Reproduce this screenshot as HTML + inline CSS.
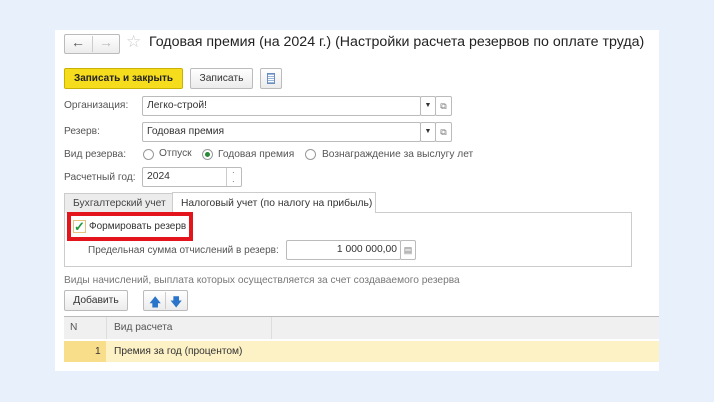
<!DOCTYPE html>
<html><head><meta charset="utf-8"><style>
*{box-sizing:border-box;margin:0;padding:0}
body{width:714px;height:402px;background:#e8f1fb;font-family:"Liberation Sans",sans-serif;font-size:10px;color:#444;position:relative;overflow:hidden;white-space:nowrap}
.p{position:absolute}
#w{left:55px;top:30px;width:604px;height:341px;background:#fff}
.btn{position:absolute;border:1px solid #bbb;border-radius:2px;background:linear-gradient(#fff,#ececec);height:21px;line-height:19px;text-align:center;color:#333;font-size:10.3px}
.inp{position:absolute;border:1px solid #bbb;border-radius:2px;height:20px;line-height:18px;padding-left:4px;color:#333;background:#fff;font-size:10.3px}
.lbl{position:absolute;color:#555;font-size:10.2px}
.rad{position:absolute;width:11px;height:11px;border:1px solid #999;border-radius:50%;background:#fff}
</style></head><body>
<div id="w" class="p"></div>
<div class="btn" style="left:64px;top:34px;width:56px;height:20px"></div>
<div class="p" style="left:92px;top:36px;width:1px;height:16px;background:#ccc"></div>
<div class="p" style="left:71px;top:34px;font-size:14px;color:#555">←</div>
<div class="p" style="left:99px;top:34px;font-size:14px;color:#bbb">→</div>
<div class="p" style="left:126px;top:32px;font-size:17px;color:#ccc">☆</div>
<div class="p" style="left:149px;top:34px;font-size:14.2px;color:#222">Годовая премия (на 2024 г.) (Настройки расчета резервов по оплате труда)</div>
<div class="btn" style="left:64px;top:68px;width:119px;background:#f5dc1c;border-color:#c9b100;color:#222;font-weight:bold;font-size:10px">Записать и закрыть</div>
<div class="btn" style="left:190px;top:68px;width:63px">Записать</div>
<div class="btn" style="left:260px;top:68px;width:22px"><div style="margin:4px auto;width:8px;height:11px;border:1px solid #6a8fbf;background:repeating-linear-gradient(#9bb6d8 0 1px,#fff 1px 2px)"></div></div>
<div class="lbl" style="left:64px;top:100px">Организация:</div>
<div class="inp" style="left:142px;top:96px;width:279px">Легко-строй!</div>
<div class="inp" style="left:420px;top:96px;width:16px;font-size:7px;text-align:center;padding:0">▼</div>
<div class="inp" style="left:435px;top:96px;width:17px;font-size:9px;padding:0;text-align:center;color:#777">⧉</div>
<div class="lbl" style="left:64px;top:126px">Резерв:</div>
<div class="inp" style="left:142px;top:122px;width:279px">Годовая премия</div>
<div class="inp" style="left:420px;top:122px;width:16px;font-size:7px;text-align:center;padding:0">▼</div>
<div class="inp" style="left:435px;top:122px;width:17px;font-size:9px;padding:0;text-align:center;color:#777">⧉</div>
<div class="lbl" style="left:64px;top:149px">Вид резерва:</div>
<div class="rad" style="left:143px;top:149px"></div><div class="lbl" style="left:159px;top:148px">Отпуск</div>
<div class="rad" style="left:202px;top:149px"><div style="width:5px;height:5px;background:#2a8a3a;border-radius:50%;margin:2px"></div></div><div class="lbl" style="left:218px;top:149px">Годовая премия</div>
<div class="rad" style="left:305px;top:149px"></div><div class="lbl" style="left:322px;top:149px">Вознаграждение за выслугу лет</div>
<div class="lbl" style="left:64px;top:172px">Расчетный год:</div>
<div class="inp" style="left:142px;top:167px;width:100px">2024</div>
<div class="p" style="left:226px;top:168px;width:1px;height:18px;background:#ccc"></div>
<div class="p" style="left:232px;top:168px;font-size:8px;color:#555;line-height:9px">·<br>·</div>
<div class="p" style="left:64px;top:193px;width:109px;height:20px;background:#ececec;border:1px solid #ccc;border-bottom:none;padding:4px 0 0 8px;color:#444;font-size:10.3px">Бухгалтерский учет</div>
<div class="p" style="left:172px;top:192px;width:204px;height:21px;background:#fff;border:1px solid #ccc;border-bottom:none;padding:5px 0 0 8px;color:#333;font-size:10.3px">Налоговый учет (по налогу на прибыль)</div>
<div class="p" style="left:64px;top:212px;width:568px;height:55px;border:1px solid #ccc;border-top:none"></div>
<div class="p" style="left:375px;top:212px;width:257px;height:1px;background:#ccc"></div>
<div class="p" style="left:67px;top:212px;width:126px;height:29px;border:4px solid #e3141c"></div>
<div class="p" style="left:73px;top:220px;width:13px;height:13px;border:1px solid #e4c27a;background:#fff;color:#1e9a3a;font-size:13px;line-height:11px;font-weight:bold">✓</div>
<div class="lbl" style="left:89px;top:221px;color:#333;font-size:10px">Формировать резерв</div>
<div class="lbl" style="left:88px;top:245px;font-size:10px">Предельная сумма отчислений в резерв:</div>
<div class="inp" style="left:286px;top:240px;width:115px;text-align:right;padding-right:3px;height:20px">1 000 000,00</div>
<div class="inp" style="left:400px;top:240px;width:16px;padding:0;text-align:center;font-size:9px;color:#777">▤</div>
<div class="lbl" style="left:64px;top:275px;color:#777">Виды начислений, выплата которых осуществляется за счет создаваемого резерва</div>
<div class="btn" style="left:64px;top:290px;width:64px">Добавить</div>
<div class="btn" style="left:143px;top:290px;width:45px"></div>
<div class="p" style="left:165px;top:292px;width:1px;height:17px;background:#ccc"></div>
<div class="p" style="left:149px;top:293px;color:#2a74c9;font-size:12px">🡅</div>
<div class="p" style="left:170px;top:293px;color:#2a74c9;font-size:12px">🡇</div>
<div class="p" style="left:64px;top:316px;width:595px;height:1px;background:#bbb"></div>
<div class="p" style="left:64px;top:317px;width:595px;height:22px;background:#f0f0f0"></div>
<div class="p" style="left:106px;top:317px;width:1px;height:22px;background:#ddd"></div>
<div class="p" style="left:271px;top:317px;width:1px;height:22px;background:#ddd"></div>
<div class="lbl" style="left:70px;top:322px">N</div>
<div class="lbl" style="left:114px;top:322px">Вид расчета</div>
<div class="p" style="left:64px;top:341px;width:595px;height:21px;background:#fdf1c6"></div>
<div class="p" style="left:64px;top:341px;width:42px;height:21px;background:#f8dd8a"></div>
<div class="lbl" style="left:95px;top:346px;color:#333">1</div>
<div class="lbl" style="left:114px;top:346px;color:#333">Премия за год (процентом)</div>
</body></html>
